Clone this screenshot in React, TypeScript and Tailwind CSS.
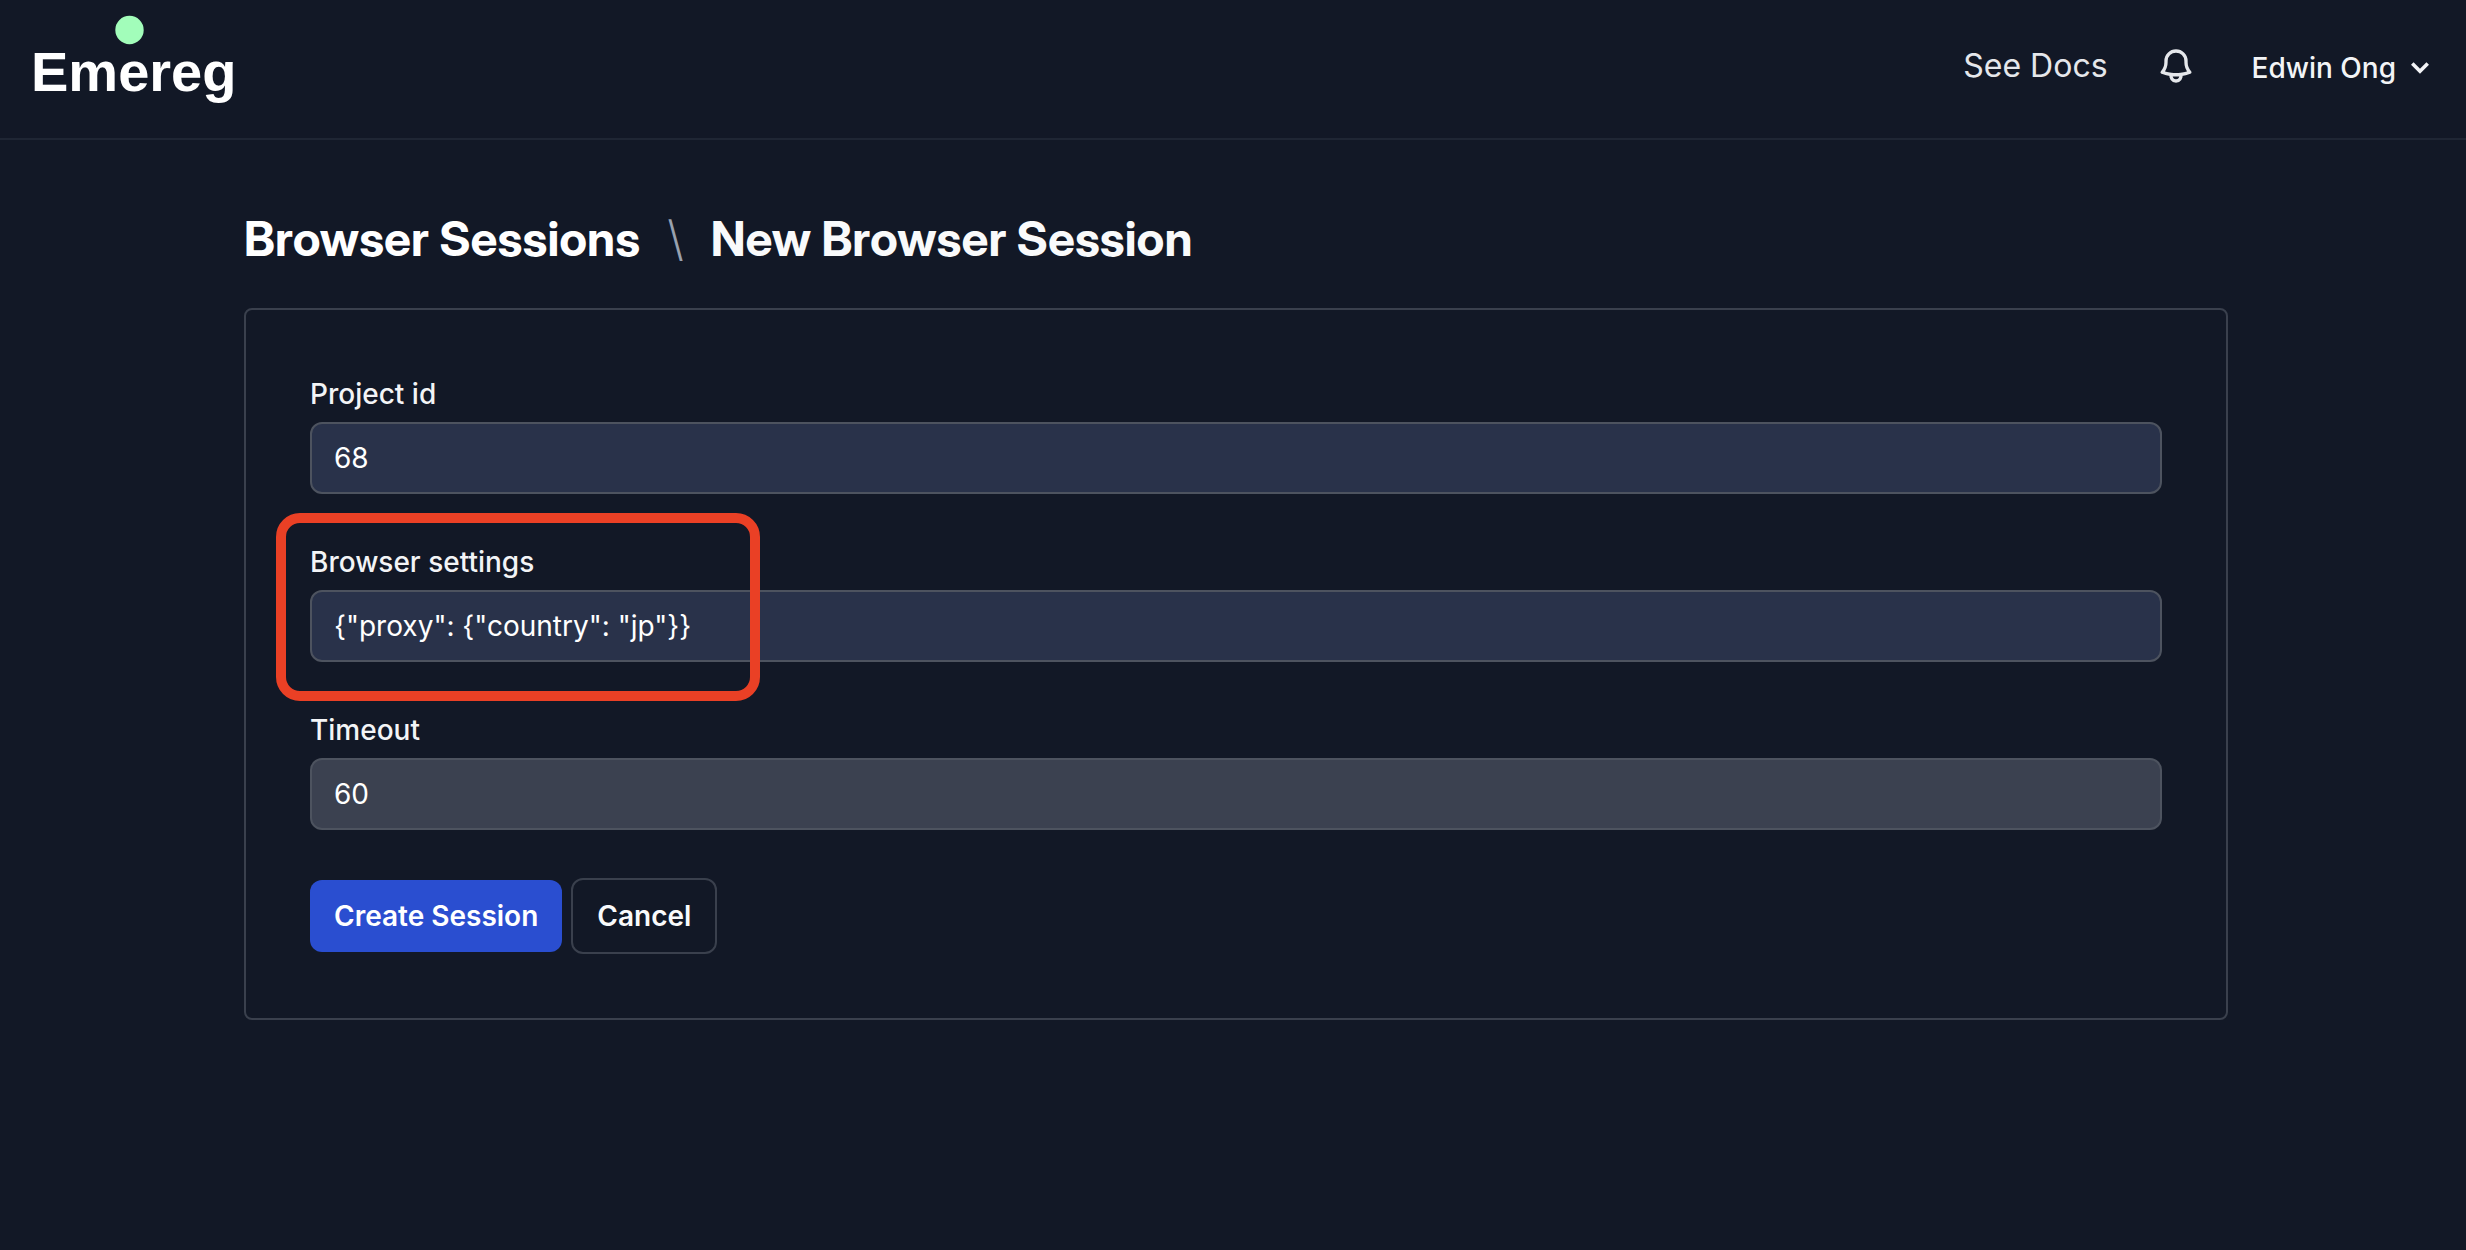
import React from 'react';
import { HiOutlineBell } from 'react-icons/hi2';

interface FieldProps {
    id: string;
    label: string;
    value: string;
    inputClass: string;
    highlighted?: boolean;
}

const Logo: React.FC = () => (
    <a href="#" aria-label="Emereg">
        <svg width="216" height="108" viewBox="0 0 216 108">
            <circle cx="98.5" cy="30" r="14.2" fill="#a2fdba" />
            <text x="0" y="91" fill="#ffffff" fontSize="56" fontWeight="700" fontFamily="'Liberation Sans', Arial, sans-serif">
                Emereg
            </text>
        </svg>
    </a>
);

const Field: React.FC<FieldProps> = ({ id, label, value, inputClass, highlighted }) => (
    <div className="relative flex flex-col gap-2">
        <label htmlFor={id} className="text-[28px] leading-10 font-medium text-gray-100">
            {label}
        </label>
        <input
            id={id}
            type="text"
            defaultValue={value}
            className={`h-18 w-full rounded-xl border-2 border-[#4d535f] px-[22px] text-[28px] leading-10 text-white outline-none ${inputClass}`}
        />
        {highlighted && (
            <div className="pointer-events-none absolute -top-[29px] -left-[34px] h-[188px] w-[484px] rounded-3xl border-10 border-[#ea4025]" />
        )}
    </div>
);

const App: React.FC = () => {
    return (
        <div className="min-h-screen bg-[#121826] font-['Inter',sans-serif] text-white">
            <header className="flex items-start justify-between border-b-2 border-[#1f2634] pr-9 pb-[30px] pl-[31px]">
                <Logo />
                <nav className="flex items-center pt-11">
                    <a href="#" className="text-[32px] leading-10 text-gray-200">
                        See Docs
                    </a>
                    <button type="button" aria-label="Notifications" className="ml-12 text-gray-200">
                        <HiOutlineBell size={40} className="stroke-2" />
                    </button>
                    <button type="button" className="ml-14 flex items-center gap-3.5 pt-1 text-[28px] leading-10 font-medium text-gray-100">
                        Edwin Ong
                        <svg width="20" height="14" viewBox="0 0 20 14" fill="none" stroke="currentColor" strokeWidth="3.6">
                            <path d="M2.3 2.5 10 10.2l7.7-7.7" />
                        </svg>
                    </button>
                </nav>
            </header>

            <main className="pt-[71px] pr-[238px] pb-16 pl-[244px]">
                <h1 className="flex items-center gap-7 font-['Inter_Display','Inter',sans-serif] text-5xl leading-14 font-bold">
                    <a href="#">Browser Sessions</a>
                    <span className="font-light text-gray-400">\</span>
                    <span className="text-gray-50">New Browser Session</span>
                </h1>

                <form
                    className="mt-[41px] flex flex-col gap-12 rounded-lg border-2 border-[#3a404d] p-16"
                    onSubmit={(e) => e.preventDefault()}
                >
                    <Field id="project-id" label="Project id" value="68" inputClass="bg-[#29324a]" />
                    <Field
                        id="browser-settings"
                        label="Browser settings"
                        value={'{"proxy": {"country": "jp"}}'}
                        inputClass="bg-[#29324a]"
                        highlighted
                    />
                    <Field id="timeout" label="Timeout" value="60" inputClass="bg-[#3b4150]" />

                    <div className="flex items-center gap-[9px] text-[28px] leading-10 font-semibold">
                        <button type="submit" className="rounded-xl bg-[#2a4ed0] px-6 py-4 text-white">
                            Create Session
                        </button>
                        <button type="button" className="rounded-xl border-2 border-[#3a404d] px-6 py-4 text-gray-50">
                            Cancel
                        </button>
                    </div>
                </form>
            </main>
        </div>
    );
};

export default App;
